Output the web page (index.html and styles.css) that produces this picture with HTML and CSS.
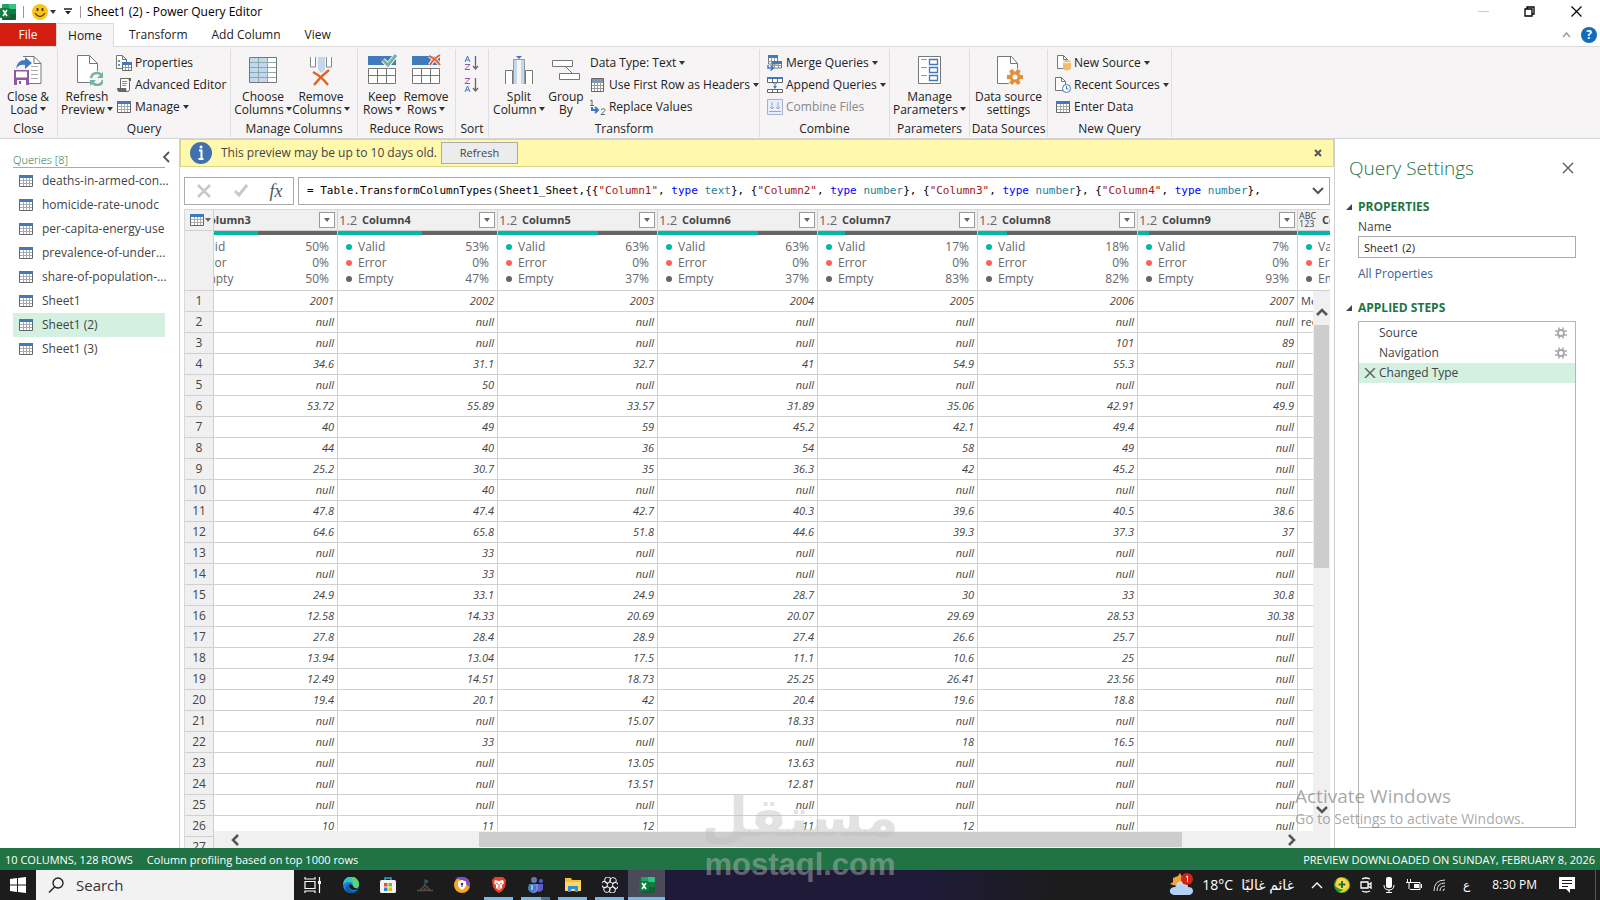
FILE: index.html
```html
<!DOCTYPE html>
<html lang="en">
<head>
  <meta charset="UTF-8">
  <meta name="viewport" content="width=device-width, initial-scale=1.0">
  <title>Sheet1 (2) - Power Query Editor</title>
  <link rel="stylesheet" href="styles.css">
</head>
<body>

<!-- shared icons -->
<svg class="defs" width="0" height="0" aria-hidden="true">
  <symbol id="i-table" viewBox="0 0 14 12">
    <path d="M.5 2v9.500h13V2" fill="#fff" stroke="#666"/>
    <path d="M4.500 3v8M7.500 3v8M10.500 3v8M1 5.500h12M1 8.500h12" stroke="#aaa"/>
    <path d="M0 0h14v3H0z" fill="#3f7abf"/>
  </symbol>
  <symbol id="i-excel" viewBox="0 0 16 16">
    <rect x="2" width="14" height="16" rx="1" fill="#21a366"/>
    <path d="M2 8h14v7q0 1-1 1H3q-1 0-1-1z" fill="#185c37"/>
    <path d="M9 0h6q1 0 1 1v4H9z" fill="#33c481"/>
    <path d="M9 5h7v5H9z" fill="#107c41"/>
    <rect y="4" width="10" height="10" rx="1" fill="#107c41"/>
    <path d="M3 6l4 6M7 6l-4 6" stroke="#fff" stroke-width="1.500"/>
  </symbol>
  <symbol id="i-gear" viewBox="0 0 12 12">
    <path d="M4 .5v11M8 .5v11M0 4h12M0 8h12" stroke="#aaa" stroke-width="1.600"/>
    <circle cx="6" cy="6" r="3" fill="#fff" stroke="#aaa" stroke-width="1.800"/>
  </symbol>
</svg>

<header class="titlebar">
  <svg class="app-icon" width="16" height="16"><use href="#i-excel"/></svg>
  <span class="sep"></span>
  <svg width="16" height="16" viewBox="0 0 16 16"><circle cx="8" cy="8" r="8" fill="#fcc419"/><path d="M5.500 4v3M10.500 4v3" stroke="#4a3b12" stroke-width="1.800"/><path d="M3 9q5 7 10 0" fill="none" stroke="#4a3b12" stroke-width="1.200"/></svg>
  <span class="caret caret-gap"></span>
  <svg class="quick" width="8" height="7" viewBox="0 0 8 7"><path d="M0 1h8" stroke="#222" stroke-width="1.500"/><path d="M1 3h6L4 6.500z" fill="#222"/></svg>
  <span class="sep"></span>
  <h1>Sheet1 (2) - Power Query Editor</h1>
  <div class="window-buttons">
    <button aria-label="Minimize"><svg width="11" height="11"><path d="M0 5.500h11" stroke="#ccc"/></svg></button>
    <button aria-label="Restore"><svg width="11" height="11" fill="none" stroke="#000" stroke-width="1.300"><path d="M1 3h7v7H1zM3 3V1h7v7H8"/></svg></button>
    <button aria-label="Close"><svg width="11" height="11" stroke="#000" stroke-width="1.200"><path d="M.5.5l10 10M10.500.5l-10 10"/></svg></button>
  </div>
</header>

<nav class="tabs">
  <button class="tab file">File</button>
  <button class="tab active">Home</button>
  <button class="tab">Transform</button>
  <button class="tab">Add Column</button>
  <button class="tab">View</button>
  <div class="tabs-right">
    <svg width="9" height="6" fill="none" stroke="#999" stroke-width="1.500"><path d="M1 5l3.500-4L8 5"/></svg>
    <button class="help" aria-label="Help">?</button>
  </div>
</nav>

<section class="ribbon">
  <div class="group g-close">
    <div class="items">
      <button class="big">
        <svg width="32" height="32" viewBox="0 0 32 32"><path d="M11 2.500h11l7 7v20H16" fill="#fff" stroke="#777"/><path d="M22 2.500v7h7" fill="none" stroke="#777"/><path d="M19 12.500h7M19 16.500h7M19 20.500h7M19 24.500h7" stroke="#aaa"/><path d="M4 15q1-9 9-9V3l7 6-7 6v-4q-6-1-9 4z" fill="#3f7abf"/><path d="M2 16h15v15H2z" fill="#8e5aa8"/><path d="M4 17.500h11v6H4zM5 26h9v5H5z" fill="#fff"/><path d="M7 27h2v3H7z" fill="#8e5aa8"/></svg>
        <span>Close &amp;<br>Load <i class="caret"></i></span>
      </button>
    </div>
    <h2>Close</h2>
  </div>

  <div class="group g-query">
    <div class="items">
      <button class="big">
        <svg width="32" height="32" viewBox="0 0 32 32"><path d="M6.500 1.500h12l8 8v19h-20z" fill="#fff" stroke="#777"/><path d="M18.500 1.500v8h8" fill="none" stroke="#777"/><circle cx="26" cy="25" r="8" fill="#f6f4f5"/><path d="M20 24q1-5 6-5 3 0 5 3M32 26q-1 5-6 5-3 0-5-3" fill="none" stroke="#75b39f" stroke-width="2.500"/><path d="M32 18v6h-6zM19 32v-6h6z" fill="#75b39f"/></svg>
        <span>Refresh<br>Preview <i class="caret"></i></span>
      </button>
      <div class="stack">
        <button class="small"><svg width="16" height="16" viewBox="0 0 16 16"><path d="M.5 13.500V.5h6l4 4v3M.5 13.500H6M6.500.5v4h4" fill="#fff" stroke="#777"/><path d="M2 5h2v2H2zM2 9h2v2H2z" fill="#888"/><path d="M6.500 9v6.500h9V9" fill="#fff" stroke="#666"/><path d="M9.500 10v5M12.500 10v5M7 12.500h8" stroke="#999"/><path d="M6 7h10v3H6z" fill="#3f7abf"/></svg>Properties</button>
        <button class="small"><svg width="16" height="16" viewBox="0 0 16 16"><path d="M4.500 11V1.500h10q-1 1-1 3v8q0 2-2 2H3" fill="#fff" stroke="#666"/><path d="M12 1h3v3h-2zM1 11h9q0 3 2 4H3q-2-1-2-4z" fill="#666"/><path d="M6 4.500h5M6 6.500h5M6 8.500h4" stroke="#888"/></svg>Advanced Editor</button>
        <button class="small"><svg width="16" height="12"><use href="#i-table"/></svg>Manage <i class="caret"></i></button>
      </div>
    </div>
    <h2>Query</h2>
  </div>

  <div class="group g-columns">
    <div class="items">
      <button class="big">
        <svg width="32" height="32" viewBox="0 0 32 32"><path d="M2.500 3.500h27v25h-27z" fill="#fff"/><path d="M2.500 3.500h18v25h-18z" fill="#c3d8ef"/><path d="M11.500 4v24M20.500 4v24M3 8.500h26M3 13.500h26M3 18.500h26M3 23.500h26" stroke="#8aa" fill="none"/><path d="M2.500 3.500h27v25h-27z" fill="none" stroke="#777"/></svg>
        <span>Choose<br>Columns <i class="caret"></i></span>
      </button>
      <button class="big">
        <svg width="32" height="32" viewBox="0 0 32 32"><path d="M5.500 3v10h5V3M26.500 3v10h-5V3" fill="#fff" stroke="#888"/><path d="M13 3h7v13l-3.500 3-3.500-3z" fill="#c3d8ef"/><path d="M8 18q9 5 15 13M24 16Q16 22 9 31" fill="none" stroke="#e0632c" stroke-width="2.500"/></svg>
        <span>Remove<br>Columns <i class="caret"></i></span>
      </button>
    </div>
    <h2>Manage Columns</h2>
  </div>

  <div class="group g-rows">
    <div class="items">
      <button class="big">
        <svg width="32" height="32" viewBox="0 0 32 32"><path d="M2 2h28v9H2z" fill="#3f7abf"/><path d="M2.500 14.500h27v15h-27zM11.500 14v15M20.500 14v15M2 21.500h27" fill="#fff" stroke="#777"/><path d="M17 6l5 5 8-10" fill="none" stroke="#f6f4f5" stroke-width="5"/><path d="M17 6l5 5 8-10" fill="none" stroke="#75b39f" stroke-width="3"/></svg>
        <span>Keep<br>Rows <i class="caret"></i></span>
      </button>
      <button class="big">
        <svg width="32" height="32" viewBox="0 0 32 32"><path d="M2 2h28v9H2z" fill="#3f7abf"/><path d="M2.500 14.500h27v15h-27zM11.500 14v15M20.500 14v15M2 21.500h27" fill="#fff" stroke="#777"/><path d="M19 2q7 3 11 9M30 1q-7 4-10 10" fill="none" stroke="#f6f4f5" stroke-width="4"/><path d="M19 2q7 3 11 9M30 1q-7 4-10 10" fill="none" stroke="#e0632c" stroke-width="2"/></svg>
        <span>Remove<br>Rows <i class="caret"></i></span>
      </button>
    </div>
    <h2>Reduce Rows</h2>
  </div>

  <div class="group g-sort">
    <div class="items sort">
      <button class="small" aria-label="Sort ascending"><svg width="16" height="16" viewBox="0 0 16 16" fill="none"><path d="M1 7l2.500-6L6 7M2 5h3" stroke="#3f7abf"/><path d="M1 9.500h5l-5 5h5" stroke="#8e5aa8"/><path d="M11.500 1v13M9 11l2.500 3 2.500-3" stroke="#666" stroke-width="1.300"/></svg></button>
      <button class="small" aria-label="Sort descending"><svg width="16" height="16" viewBox="0 0 16 16" fill="none"><path d="M1 1.500h5l-5 5h5" stroke="#8e5aa8"/><path d="M1 15l2.500-6L6 15M2 13h3" stroke="#3f7abf"/><path d="M11.500 1v13M9 11l2.500 3 2.500-3" stroke="#666" stroke-width="1.300"/></svg></button>
    </div>
    <h2>Sort</h2>
  </div>

  <div class="group g-transform">
    <div class="items">
      <button class="big">
        <svg width="32" height="32" viewBox="0 0 32 32"><path d="M2.500 30V16.500h7V30M29.500 30V16.500h-7V30" fill="#fff" stroke="#777"/><path d="M10.500 30V5.500h11V30" fill="#c3d8ef" stroke="#999"/><path d="M14 6h4v24h-4z" fill="#f6f4f5"/><path d="M13 2h6l-3 3z" fill="#3f7abf"/></svg>
        <span>Split<br>Column <i class="caret"></i></span>
      </button>
      <button class="big narrow">
        <svg width="32" height="32" viewBox="0 0 32 32"><path d="M2.500 6.500h20v6h-20zM9.500 19.500h20v6h-20z" fill="#fff" stroke="#777"/><path d="M16 13l6 6" stroke="#777"/></svg>
        <span>Group<br>By</span>
      </button>
      <div class="stack">
        <button class="small">Data Type: Text <i class="caret"></i></button>
        <button class="small"><svg width="16" height="14" viewBox="0 0 16 14"><path d="M1.500.5h12v13h-12z" fill="#fff" stroke="#666"/><path d="M2 1h11v3H2z" fill="#6b97cc"/><path d="M4.500 1v12M7.500 1v12M10.500 1v12M2 4.500h11M2 7.500h11M2 10.500h11" stroke="#999"/></svg>Use First Row as Headers <i class="caret"></i></button>
        <button class="small"><svg width="16" height="16" viewBox="0 0 16 16" fill="none"><path d="M0 2l2-1v6M0 6.500h4" stroke="#666"/><path d="M2 8v3h6M5 8l3 3-3 3" stroke="#3f7abf" stroke-width="2"/><path d="M11 10.500q4-2 4 1l-4 4h4" stroke="#666"/></svg>Replace Values</button>
      </div>
    </div>
    <h2>Transform</h2>
  </div>

  <div class="group g-combine">
    <div class="items">
      <div class="stack">
        <button class="small"><svg width="16" height="16" viewBox="0 0 16 16"><path d="M1.500 2v7h9V2M5.500 7v6h9V7" fill="#fff" stroke="#777"/><path d="M4.500 3v6M7.500 3v10M11.500 9v4M1 6.500h9M6 10.500h8" stroke="#999"/><path d="M1 0h10v3H1zM5 6h10v3H5z" fill="#3f7abf"/><path d="M1 10v3h5M3.500 10.500l3 2.500-3 2.500" fill="none" stroke="#3f7abf" stroke-width="1.500"/></svg>Merge Queries <i class="caret"></i></button>
        <button class="small"><svg width="16" height="16" viewBox="0 0 16 16"><path d="M.5 1.500h15v4H.5zM.5 12.500h15v3H.5zM5.500 2v3M10.500 2v3M5.500 13v2M10.500 13v2" fill="#fff" stroke="#666"/><path d="M0 0h16v2H0zM6 7h4L8 5zM6 9h4l-2 3zM7.500 6h1v5h-1z" fill="#3f7abf"/></svg>Append Queries <i class="caret"></i></button>
        <button class="small" disabled><svg width="16" height="16" viewBox="0 0 16 16" fill="none"><path d="M.5.5h15v15H.5z" fill="#e9effa" stroke="#a5b0d6"/><path d="M5 3v7M3 8l2 2 2-2M11 3v7M9 8l2 2 2-2M2 12.500h12" stroke="#96a4d0"/></svg>Combine Files</button>
      </div>
    </div>
    <h2>Combine</h2>
  </div>

  <div class="group g-params">
    <div class="items">
      <button class="big">
        <svg width="32" height="32" viewBox="0 0 32 32"><path d="M4.500 2.500h22v27h-22z" fill="#fff" stroke="#777"/><path d="M7 5.500h6M7 13.500h6M7 21.500h6" stroke="#999"/><path d="M15.500 5.500h8v5h-8zM15.500 13.500h8v5h-8zM15.500 21.500h8v5h-8z" fill="#fff" stroke="#3f7abf" stroke-width="1.300"/></svg>
        <span>Manage<br>Parameters <i class="caret"></i></span>
      </button>
    </div>
    <h2>Parameters</h2>
  </div>

  <div class="group g-sources">
    <div class="items">
      <button class="big">
        <svg width="32" height="32" viewBox="0 0 32 32"><path d="M4.500 2.500h14l6 7v20h-20z" fill="#fff" stroke="#777"/><path d="M17.500 2.500v7h7" fill="none" stroke="#777"/><circle cx="22" cy="23" r="9" fill="#f6f4f5"/><path d="M14 23h16M18 16l8 14M26 16l-8 14" stroke="#e0913a" stroke-width="4"/><circle cx="22" cy="23" r="5.500" fill="#e0913a"/><circle cx="22" cy="23" r="2.500" fill="#fff"/></svg>
        <span>Data source<br>settings</span>
      </button>
    </div>
    <h2>Data Sources</h2>
  </div>

  <div class="group g-new">
    <div class="items">
      <div class="stack">
        <button class="small"><svg width="16" height="16" viewBox="0 0 16 16"><path d="M2.500.5h6l4 4v9h-10z" fill="#fff" stroke="#777"/><path d="M8.500.5v4h4" fill="none" stroke="#777"/><path d="M8 6q4-2 8 0v8q-4 3-8 0z" fill="#efbd6b"/><path d="M8 7q4 2 8 0" fill="none" stroke="#fff"/></svg>New Source <i class="caret"></i></button>
        <button class="small"><svg width="16" height="16" viewBox="0 0 16 16"><path d="M.5.5h6l4 4v9H.5z" fill="#fff" stroke="#777"/><path d="M6.500.5v4h4" fill="none" stroke="#777"/><circle cx="11.500" cy="11.500" r="4" fill="#fff" stroke="#3f7abf"/><path d="M11.500 9v3h2" fill="none" stroke="#3f7abf"/></svg>Recent Sources <i class="caret"></i></button>
        <button class="small"><svg width="16" height="12"><use href="#i-table"/></svg>Enter Data</button>
      </div>
    </div>
    <h2>New Query</h2>
  </div>
</section>

<main class="workspace">
  <aside class="queries">
    <button class="collapse" aria-label="Collapse"><svg width="7" height="12" fill="none" stroke="#555" stroke-width="1.800"><path d="M6 1L1 6l5 5"/></svg></button>
    <h2>Queries [8]</h2>
    <ul>
      <li><svg width="14" height="12"><use href="#i-table"/></svg>deaths-in-armed-con...</li>
      <li><svg width="14" height="12"><use href="#i-table"/></svg>homicide-rate-unodc</li>
      <li><svg width="14" height="12"><use href="#i-table"/></svg>per-capita-energy-use</li>
      <li><svg width="14" height="12"><use href="#i-table"/></svg>prevalence-of-under...</li>
      <li><svg width="14" height="12"><use href="#i-table"/></svg>share-of-population-...</li>
      <li><svg width="14" height="12"><use href="#i-table"/></svg>Sheet1</li>
      <li class="selected"><svg width="14" height="12"><use href="#i-table"/></svg>Sheet1 (2)</li>
      <li><svg width="14" height="12"><use href="#i-table"/></svg>Sheet1 (3)</li>
    </ul>
  </aside>

  <section class="preview">
    <div class="notice">
      <svg width="22" height="22" viewBox="0 0 22 22"><circle cx="11" cy="11" r="11" fill="#3f72af"/><circle cx="11" cy="5" r="1.500" fill="#fff"/><path d="M9 8.500h2.500V17M8.500 17h5" fill="none" stroke="#fff" stroke-width="2"/></svg>
      <span>This preview may be up to 10 days old.</span>
      <button class="refresh">Refresh</button>
      <button class="dismiss" aria-label="Dismiss"><svg width="8" height="8" stroke="#555" stroke-width="2"><path d="M1 1l6 6M7 1L1 7"/></svg></button>
    </div>

    <div class="formula">
      <div class="formula-buttons">
        <button aria-label="Cancel"><svg width="16" height="14" fill="none" stroke="#c8c8c8" stroke-width="2.500"><path d="M2 1l12 12M14 1L2 13"/></svg></button>
        <button aria-label="Accept"><svg width="16" height="14" fill="none" stroke="#c8c8c8" stroke-width="3"><path d="M2 7l4 4 8-10"/></svg></button>
        <button class="fx">fx</button>
      </div>
      <div class="formula-box">
        <code contenteditable="true" spellcheck="false">= Table.TransformColumnTypes(Sheet1_Sheet,{{<s>"Column1"</s>, <b>type</b> <i>text</i>}, {<s>"Column2"</s>, <b>type</b> <i>number</i>}, {<s>"Column3"</s>, <b>type</b> <i>number</i>}, {<s>"Column4"</s>, <b>type</b> <i>number</i>},</code>
        <button aria-label="Expand"><svg width="12" height="8" fill="none" stroke="#555" stroke-width="2"><path d="M1 1l5 5 5-5"/></svg></button>
      </div>
    </div>

    <div class="grid">
      <table>
        <colgroup><col class="c-num"><col class="c-cut"><col><col><col><col><col><col><col></colgroup>
        <thead>
          <tr class="names" id="names"><th><button class="corner" aria-label="Table menu"><svg width="14" height="12"><use href="#i-table"/></svg><i class="caret"></i></button></th></tr>
          <tr class="profile" id="profile"><th></th></tr>
        </thead>
        <tbody id="rows"></tbody>
      </table>
      <div class="vscroll">
        <svg width="12" height="8" fill="none" stroke="#555" stroke-width="2.500"><path d="M1 7l5-5 5 5"/></svg>
        <div class="thumb"></div>
        <svg width="12" height="8" fill="none" stroke="#555" stroke-width="2.500"><path d="M1 1l5 5 5-5"/></svg>
      </div>
      <div class="hscroll">
        <svg width="8" height="12" fill="none" stroke="#555" stroke-width="2.500"><path d="M7 1L2 6l5 5"/></svg>
        <div class="thumb"></div>
        <svg width="8" height="12" fill="none" stroke="#555" stroke-width="2.500"><path d="M1 1l5 5-5 5"/></svg>
      </div>
    </div>
  </section>

  <aside class="settings">
    <div class="settings-head">
      <h2>Query Settings</h2>
      <button aria-label="Close pane"><svg width="12" height="12" stroke="#555" stroke-width="1.200"><path d="M1 1l10 10M11 1L1 11"/></svg></button>
    </div>
    <h3>PROPERTIES</h3>
    <label for="query-name">Name</label>
    <input type="text" id="query-name" value="Sheet1 (2)">
    <a href="#">All Properties</a>
    <h3>APPLIED STEPS</h3>
    <ul class="steps">
      <li><span>Source</span><svg width="12" height="12"><use href="#i-gear"/></svg></li>
      <li><span>Navigation</span><svg width="12" height="12"><use href="#i-gear"/></svg></li>
      <li class="selected"><svg class="del" width="12" height="10" stroke="#666" stroke-width="1.500"><path d="M1 0l10 10M11 0L1 10"/></svg><span>Changed Type</span></li>
    </ul>
  </aside>
</main>

<footer class="status">
  <span>10 COLUMNS, 128 ROWS</span>
  <span>Column profiling based on top 1000 rows</span>
  <span class="right">PREVIEW DOWNLOADED ON SUNDAY, FEBRUARY 8, 2026</span>
</footer>

<div class="taskbar">
  <button class="start" aria-label="Start"><svg width="16" height="16" fill="#fff"><path d="M0 2l7-1v6.500H0zM8 1l8-1v7.500H8zM0 8.500h7V15l-7-1zM8 8.500h8V16l-8-1z"/></svg></button>
  <div class="search">
    <svg width="16" height="16" fill="none" stroke="#222" stroke-width="1.400"><circle cx="10" cy="6" r="5"/><path d="M6.500 10L1 15.500"/></svg>
    <input type="text" placeholder="Search" aria-label="Search">
  </div>
  <div class="apps">
    <button aria-label="Task view"><svg width="18" height="16" fill="none" stroke="#fff" stroke-width="1.200"><path d="M1 4.500h10v7H1zM1 0v2h10V0M1 16v-2h10v2M15.500 0v16"/><path d="M14 4h3v3h-3z" fill="#fff" stroke="none"/></svg></button>
    <button aria-label="Edge"><svg width="16" height="16" viewBox="0 0 16 16"><circle cx="8" cy="8" r="8" fill="#1583d8"/><path d="M0 8a8 8 0 0 1 16-1q0 4-4 4-3 0-2-2Q10 5 6 5 2 5 0 8z" fill="#35c4c0"/><path d="M8 0q7 0 8 7 0 4-4 4-3 0-2-2 1-3-2-9z" fill="#5fd46a"/><path d="M6 7q-2 5 3 7 3 1 6-2-3 5-8 4-5-1-4-6 1-2 3-3z" fill="#0c59a4"/><path d="M10 9q-2-3-4-1 0 5 5 5 3 0 4-2-4 1-5-2z" fill="#1c1c1c"/></svg></button>
    <button aria-label="Store"><svg width="16" height="16" viewBox="0 0 16 16"><path d="M5 4V1h6v3" fill="none" stroke="#2aa7d8" stroke-width="1.500"/><rect y="3" width="16" height="13" rx="1.500" fill="#f3f3f3"/><path d="M4 6h3.500v3.500H4z" fill="#e8502a"/><path d="M8.500 6H12v3.500H8.500z" fill="#7db928"/><path d="M4 10.500h3.500V14H4z" fill="#1a8fe0"/><path d="M8.500 10.500H12V14H8.500z" fill="#f7b500"/></svg></button>
    <button aria-label="Game"><svg width="16" height="16" viewBox="0 0 16 16"><path d="M8 9V2" stroke="#3b5c70"/><path d="M8 3h3v3H8z" fill="#1f5a75"/><path d="M0 13.500h16M3 13l5-5 5 5" fill="none" stroke="#5b4a42" stroke-width="1.500"/><path d="M6 13l2-3 2 3z" fill="#3b4a5c"/></svg></button>
    <button aria-label="Browser"><svg width="16" height="16" viewBox="0 0 16 16"><circle cx="8" cy="8" r="8" fill="#f5a623"/><path d="M5 1a8 8 0 0 1 10 8q-3-6-10-8z" fill="#7a4be0" stroke="#7a4be0" stroke-width="2"/><path d="M8 3l4 1.500v4Q11 12 8 13q-3-1-4-4.500v-4z" fill="#fff"/><circle cx="8" cy="7" r="1.300" fill="#444"/><path d="M7.500 7h1v3h-1z" fill="#444"/></svg></button>
    <button class="open" aria-label="Brave"><svg width="16" height="16" viewBox="0 0 16 16"><path d="M4 0h8l3 3-1 7q-2 4-6 6-4-2-6-6L1 3z" fill="#e8432a"/><path d="M4 3l4 1 4-1 1 3-2 2 0 3-3 2-3-2 0-3-2-2z" fill="#fff"/><path d="M5 6l2 1M11 6L9 7M8 7v3M6.500 11h3" stroke="#e8432a"/></svg></button>
    <button class="open stacked" aria-label="Teams"><svg width="16" height="16" viewBox="0 0 16 16"><circle cx="6" cy="3" r="3" fill="#6878a8"/><circle cx="13" cy="4" r="2" fill="#5b5fc7"/><path d="M10 7h5v5q-1 3-5 3z" fill="#5b5fc7"/><path d="M1 7h9v6q-1 3-5 3-4-1-4-4z" fill="#7b83eb"/><circle cx="4" cy="11" r="4" fill="#3d7fb8"/><path d="M4 8v5" stroke="#fff"/></svg></button>
    <button class="open" aria-label="Explorer"><svg width="16" height="16" viewBox="0 0 16 16"><path d="M0 1h6l1 2h9v11H0z" fill="#f7bd3e"/><path d="M0 5h16v9H0z" fill="#ffd768"/><path d="M3 9h10v6h-3v-3H6v3H3z" fill="#2f8fdd"/></svg></button>
    <button class="open" aria-label="ChatGPT"><svg width="16" height="16" viewBox="-8 -8 16 16" fill="none" stroke="#eee"><g id="petal"><path d="M0-3V-5.500q2-3 5-1.500 2 2 1 4L3-1.500 0-3"/></g><use href="#petal" transform="rotate(60)"/><use href="#petal" transform="rotate(120)"/><use href="#petal" transform="rotate(180)"/><use href="#petal" transform="rotate(240)"/><use href="#petal" transform="rotate(300)"/></svg></button>
    <button class="open current" aria-label="Excel"><svg width="16" height="16"><use href="#i-excel"/></svg></button>
  </div>
  <div class="tray">
    <button class="weather">
      <svg width="25" height="24" viewBox="0 0 25 24"><path d="M9 3l2-3 2 4q1 6-5 9l-4-1-3-1 3-2V5z" fill="#f2a33c"/><circle cx="13" cy="14" r="6" fill="#cfe1f8"/><path d="M5 22q-5-1-4-5 1-3 5-3 6-6 13 0 5 0 5 4 0 3-4 4z" fill="#b5d2f5"/><circle cx="18" cy="6" r="6" fill="#d32516"/><path d="M17 4l1.500-1v6" fill="none" stroke="#fff"/></svg>
      <span>18°C</span><span lang="ar" dir="rtl">غائم غالبًا</span>
    </button>
    <svg class="t-up" width="12" height="8" fill="none" stroke="#fff" stroke-width="1.400"><path d="M1 7l5-5 5 5"/></svg>
    <svg class="t-green" width="16" height="16" viewBox="0 0 16 16"><circle cx="8" cy="8" r="8" fill="#2e9a3c"/><path d="M3 2a8 8 0 0 1 12 9q-6 6-10 4 6-2 4-5-6 3-8-2z" fill="#fbd21f"/><circle cx="8" cy="7.500" r="5" fill="#fbd96a"/><path d="M8 4v7M4.500 7.500h7" stroke="#167a2b" stroke-width="2"/></svg>
    <svg class="t-meet" width="12" height="16" fill="none" stroke="#fff" stroke-width="1.300"><path d="M1 5h7v6H1zM8 8l3-2v5L8 9M2 2q4-2 8 0M2 14q4 2 8 0"/></svg>
    <svg class="t-mic" width="12" height="16"><rect x="3" width="6" height="11" rx="2" fill="#fff"/><path d="M1 8q0 5 5 5t5-5M6 13v2M3 15.500h6" fill="none" stroke="#fff"/></svg>
    <svg class="t-bat" width="16" height="14" fill="none" stroke="#fff"><path d="M5 4.500h9v7H4M15.500 6v4M1.500 1v3M4.500 1v3M0 4.500h6M3 5v6"/><path d="M8 6h5v4H8z" fill="#fff" stroke="none"/></svg>
    <svg class="t-wifi" width="13" height="14" fill="none" stroke="#ddd"><path d="M1 13Q1 2 12 2M4 13q0-8 8-8M7 13q0-5 5-5M10 13q0-2 2-2"/></svg>
    <span class="lang" lang="ar">ع</span>
    <span class="clock">8:30 PM</span>
    <button class="notes" aria-label="Notifications"><svg width="16" height="16"><path d="M0 0h16v12h-5v4l-4-4H0z" fill="#fff"/><path d="M3 3.500h10M3 6.500h10M3 9.500h6" stroke="#1c1c1c"/></svg></button>
  </div>
</div>

<div class="activate">
  <p class="activate-title">Activate Windows</p>
  <p>Go to Settings to activate Windows.</p>
</div>
<div class="watermark">
  <p lang="ar">مستقل</p>
  <p class="site">mostaql.com</p>
</div>

<script src="script.js"></script>
</body>
</html>
```

FILE: styles.css
```css
* { box-sizing: border-box; margin: 0; padding: 0; }
body { height: 100vh; display: flex; flex-direction: column; overflow: hidden; background: #fff; color: #222; font: 12px/16px "Open Sans", "Noto Sans", "DejaVu Sans", sans-serif; }
button { font: inherit; color: inherit; border: 0; background: none; cursor: pointer; }
ul { list-style: none; }
h1, h2, h3 { font-size: 12px; font-weight: normal; }
svg { flex: none; display: block; }
.defs { position: absolute; }

.caret { display: inline-block; flex: none; border: 3px solid transparent; border-top: 4px solid #333; border-bottom: 0; vertical-align: 3px; }
.caret-gap { margin: 0 8px 0 2px; }

/* title bar */
.titlebar { display: flex; align-items: center; height: 23px; flex: none; color: #000; }
.sep { width: 1px; height: 12px; background: #999; margin: 0 8px 0 7px; }
.titlebar .sep:last-of-type { margin: 0 6px 0 8px; }
.window-buttons { margin-left: auto; display: flex; }
.window-buttons button { width: 46px; height: 22px; display: flex; align-items: center; justify-content: center; }
.window-buttons button:last-child { width: 48px; }

/* tabs */
.tabs { display: flex; height: 24px; flex: none; border-bottom: 1px solid #dadada; }
.tab { height: 23px; padding: 0 12px; }
.tab.file { width: 56px; background: #d41e12; color: #fff; }
.tab.active { width: 58px; height: 24px; padding: 0 11px; margin-right: 3px; background: #f6f4f5; border: 1px solid #dadada; border-bottom: 0; }
.tabs-right { margin-left: auto; display: flex; align-items: center; gap: 10px; padding-right: 3px; }
.help { width: 16px; height: 16px; border-radius: 8px; background: #0f6cbd; color: #fff; font-weight: bold; line-height: 16px; }

/* ribbon */
.ribbon { display: flex; height: 92px; flex: none; padding-top: 2px; background: #f6f4f5; border-bottom: 1px solid #d5d5d5; }
.group { display: flex; flex-direction: column; height: 88px; border-right: 1px solid #e0dede; white-space: nowrap; }
.group h2 { text-align: center; margin-top: auto; line-height: 16px; }
.items { display: flex; padding-top: 3px; }
.big { width: 58px; padding-top: 2px; display: flex; flex-direction: column; align-items: center; gap: 4px; line-height: 13px; }
.big .caret { margin-left: -1px; }
.big.narrow { width: 36px; }
.small { display: flex; align-items: center; height: 22px; gap: 3px; }
.small:disabled { color: #888; }
.g-close { width: 58px; }
.g-close .big { width: 56px; }
.g-query { width: 173px; }
.g-columns { width: 127px; }
.g-columns .items { padding-left: 3px; }
.g-rows { width: 98px; }
.g-rows .items { padding-left: 2px; }
.g-rows .big { width: 44px; }
.g-sort { width: 33px; }
.sort { flex-direction: column; align-items: center; }
.g-transform { width: 271px; }
.g-transform .items { padding-left: 1px; }
.g-transform .stack { padding-left: 6px; }
.g-combine { width: 130px; }
.g-combine .items, .g-new .items { padding-left: 7px; }
.g-params { width: 80px; }
.g-sources { width: 78px; }
.g-params .big, .g-sources .big { width: 100%; }
.g-new { width: 124px; }

/* workspace */
.workspace { flex: 1; min-height: 0; display: flex; }
.queries { width: 180px; flex: none; padding: 13px 14px 0 13px; border-right: 1px solid #d0d0d0; position: relative; color: #444; }
.queries h2 { color: #217346; font-size: 11px; font-weight: 300; padding-right: 8px; border-bottom: 1px solid #aaa; height: 16px; margin-bottom: 1px; }
.queries li { display: flex; align-items: center; gap: 9px; height: 24px; padding-left: 6px; white-space: nowrap; }
.selected { background: #d3f0e0; }
.collapse { position: absolute; right: 9px; top: 12px; }

.preview { flex: 1; min-width: 0; display: flex; flex-direction: column; border-right: 1px solid #d0d0d0; }
.notice { display: flex; align-items: center; gap: 9px; height: 28px; flex: none; padding: 0 11px 0 9px; background: #fff8ad; border: 1px solid #dcd68c; color: #444; }
.refresh { width: 77px; height: 22px; margin-left: -5px; border: 1px solid #aaa; background: #ececec; font-size: 11px; }
.dismiss { margin-left: auto; }
.formula { display: flex; gap: 4px; margin: 10px 4px 4px; height: 28px; flex: none; }
.formula-buttons { width: 110px; display: flex; align-items: center; justify-content: space-around; border: 1px solid #aaa; }
.fx { font: italic 18px/20px "Liberation Serif", serif; color: #555; }
.formula-box { flex: 1; min-width: 0; display: flex; align-items: center; justify-content: space-between; padding: 0 5px 0 8px; border: 1px solid #aaa; }
.formula-box code { font: 11px/16px "DejaVu Sans Mono", monospace; color: #000; white-space: nowrap; overflow: hidden; outline: 0; }
code s { color: #a31515; text-decoration: none; }
code b { color: #0000ff; font-weight: normal; }
code i { color: #267f99; font-style: normal; }

/* data grid */
.grid { position: relative; flex: 1; min-height: 0; overflow: hidden; margin: 0 4px 0 4px; border-top: 1px solid #d8d8d8; border-left: 1px solid #d8d8d8; }
.grid table { table-layout: fixed; width: 1273px; border-spacing: 0; color: #444; }
.grid col { width: 160px; }
.grid .c-num { width: 29px; }
.grid .c-cut { width: 124px; }
.grid th, .grid td { border-right: 1px solid #d0d0d0; border-bottom: 1px solid #d0d0d0; font-weight: normal; overflow: hidden; white-space: nowrap; }
.grid tbody th, .profile th:first-child { background: #f0f0f0; }
.names th { height: 21px; background: #f0f0f0; }
.cut { display: flex; justify-content: flex-end; }
.head { display: flex; align-items: center; width: 159px; height: 20px; padding: 0 2px 0 1px; flex: none; }
.head .type { width: 23px; font-size: 13px; color: #666; text-align: left; }
.head .type.any { font-size: 9px; line-height: 8px; color: #444; }
.head b { flex: 1; text-align: left; font-size: 11px; }
.head button { width: 16px; height: 16px; border: 1px solid #999; background: #fff; display: flex; align-items: center; justify-content: center; }
.head .caret, .corner .caret { border-top-color: #666; }
.corner { display: flex; align-items: center; gap: 1px; padding-left: 5px; }
.profile th { height: 60px; vertical-align: top; }
.stats { width: 159px; flex: none; color: #666; }
.bar { height: 4px; background: #666; margin-bottom: 4px; }
.bar div { height: 4px; background: #00b8aa; }
.stats p { display: flex; align-items: center; padding: 0 8px; line-height: 16px; }
.stats p::before { content: ""; width: 6px; height: 6px; border-radius: 3px; margin-right: 6px; background: #666; }
.stats .valid::before { background: #00b8aa; }
.stats .error::before { background: #fd625e; }
.stats span { margin-left: auto; }
.grid tbody th, .grid tbody td { height: 21px; line-height: 20px; }
.grid td { font-size: 11px; font-style: italic; text-align: right; padding-right: 3px; }
.grid td:last-child { font-style: normal; text-align: left; padding-left: 3px; }

.vscroll, .hscroll { position: absolute; display: flex; align-items: center; background: #f0f0f0; }
.vscroll { top: 81px; right: 0; bottom: 17px; width: 17px; flex-direction: column; padding: 17px 0 17px; gap: 9px; }
.vscroll .thumb { width: 15px; height: 48%; background: #cdcdcd; margin-bottom: auto; }
.hscroll { left: 29px; right: 0; bottom: 0; height: 17px; padding: 0 34px 0 17px; }
.hscroll .thumb { width: 66%; height: 15px; background: #cdcdcd; margin: 0 auto 0 22.5%; }

/* settings */
.settings { width: 265px; flex: none; display: flex; flex-direction: column; padding: 14px 24px 20px 23px; color: #444; }
.settings-head { display: flex; align-items: center; justify-content: space-between; height: 30px; margin: 0 2px 15px -9px; }
.settings-head h2 { font-size: 19px; font-weight: 300; color: #217346; }
.settings h3 { font-weight: bold; color: #217346; height: 18px; line-height: 18px; position: relative; }
.settings h3::before { content: ""; position: absolute; left: -12px; top: 6px; border-left: 6px solid transparent; border-bottom: 6px solid #444; }
.settings label { height: 20px; line-height: 22px; }
.settings input { height: 22px; border: 1px solid #aaa; padding: 0 5px; font: inherit; font-size: 11px; color: #222; }
.settings a { color: #3a6096; text-decoration: none; margin: 8px 0 17px; }
.steps { flex: 1; margin-top: 4px; padding-top: 1px; border: 1px solid #b5b5b5; }
.steps li { display: flex; align-items: center; height: 20px; padding: 0 8px 0 20px; position: relative; }
.steps li span { flex: 1; }
.steps .del { position: absolute; left: 5px; top: 5px; }

/* status bar and taskbar */
.status { display: flex; align-items: center; gap: 14px; height: 22px; flex: none; padding: 2px 5px 0; background: #217346; color: #fff; font-size: 11px; }
.status .right { margin-left: auto; }
.taskbar { display: flex; height: 30px; flex: none; color: #fff; background: linear-gradient(90deg, #1c1c1c 0 37%, #1e1a38 42% 58%, #1c1c1c 66%); }
.start { width: 36px; display: flex; align-items: center; justify-content: center; }
.search { width: 258px; display: flex; align-items: center; gap: 12px; padding-left: 12px; background: #f2f2f2; }
.search input { flex: 1; min-width: 0; border: 0; outline: 0; background: none; font: inherit; font-size: 15px; }
.search input::placeholder { color: #333; opacity: 1; }
.apps { display: flex; }
.apps button { width: 37px; display: flex; align-items: center; justify-content: center; border-bottom: 3px solid transparent; border-top: 3px solid transparent; }
.apps button:first-child { width: 38px; }
.apps .open { position: relative; }
.apps .open::after { content: ""; position: absolute; left: 4px; right: 4px; bottom: -3px; height: 3px; background: #76b9ed; }
.apps .stacked::after { background: linear-gradient(90deg, #76b9ed 70%, #4c7496 70%); }
.apps .current { background: #4b4a58; }
.apps .current::after { left: 0; right: 0; }
.tray { margin-left: auto; display: flex; align-items: center; font-size: 12px; }
.weather { display: flex; align-items: center; gap: 8px; font-size: 14px; margin-right: 17px; }
.t-up { margin-right: 11px; }
.t-green { margin-right: 10px; }
.t-meet { margin-right: 11px; }
.t-mic { margin-right: 11px; }
.t-bat { margin-right: 11px; }
.t-wifi { margin-right: 17px; }
.lang { margin-right: 22px; }
.clock { margin-right: 22px; }
.notes { padding-right: 20px; border-right: 1px solid #555; height: 30px; margin-right: 4px; }

/* overlays */
.activate { position: absolute; left: 1295px; top: 783px; color: rgba(120, 120, 120, .65); font-size: 14px; line-height: 20px; pointer-events: none; }
.activate-title { font-size: 19px; line-height: 26px; }
.watermark { position: absolute; left: 700px; top: 786px; width: 200px; text-align: center; color: rgba(190, 190, 190, .45); font: bold 54px/64px "DejaVu Sans", sans-serif; pointer-events: none; }
.watermark .site { font: bold 31px/30px "Liberation Sans", sans-serif; }
```

FILE: script.js
```js
var columns = [
  { name: "Column3", valid: 50, empty: 50 },
  { name: "Column4", valid: 53, empty: 47 },
  { name: "Column5", valid: 63, empty: 37 },
  { name: "Column6", valid: 63, empty: 37 },
  { name: "Column7", valid: 17, empty: 83 },
  { name: "Column8", valid: 18, empty: 82 },
  { name: "Column9", valid: 7, empty: 93 },
  { name: "Column10", valid: 100, empty: 0, any: true }
];

// n = null
var data = [
  "2001 2002 2003 2004 2005 2006 2007 Mean",
  "n n n n n n n recent",
  "n n n n n 101 89",
  "34.6 31.1 32.7 41 54.9 55.3 n",
  "n 50 n n n n n",
  "53.72 55.89 33.57 31.89 35.06 42.91 49.9",
  "40 49 59 45.2 42.1 49.4 n",
  "44 40 36 54 58 49 n",
  "25.2 30.7 35 36.3 42 45.2 n",
  "n 40 n n n n n",
  "47.8 47.4 42.7 40.3 39.6 40.5 38.6",
  "64.6 65.8 51.8 44.6 39.3 37.3 37",
  "n 33 n n n n n",
  "n 33 n n n n n",
  "24.9 33.1 24.9 28.7 30 33 30.8",
  "12.58 14.33 20.69 20.07 29.69 28.53 30.38",
  "27.8 28.4 28.9 27.4 26.6 25.7 n",
  "13.94 13.04 17.5 11.1 10.6 25 n",
  "12.49 14.51 18.73 25.25 26.41 23.56 n",
  "19.4 20.1 42 20.4 19.6 18.8 n",
  "n n 15.07 18.33 n n n",
  "n 33 n n 18 16.5 n",
  "n n 13.05 13.63 n n n",
  "n n 13.51 12.81 n n n",
  "n n n n n n n",
  "10 11 12 11 12 n n",
  ""
];

var names = "";
var profile = "";
columns.forEach(function (c, i) {
  var open = i === 0 ? '<th><div class="cut">' : "<th><div>";
  var type = c.any ? '<span class="type any">ABC<br>123</span>' : '<span class="type">1.2</span>';
  names += open + '<div class="head">' + type + "<b>" + c.name + '</b><button aria-label="Filter ' + c.name + '"><i class="caret"></i></button></div></div></th>';
  profile += open + '<div class="stats"><div class="bar"><div style="width:' + c.valid + '%"></div></div>' +
    '<p class="valid">Valid<span>' + c.valid + '%</span></p>' +
    '<p class="error">Error<span>0%</span></p>' +
    '<p class="empty">Empty<span>' + c.empty + '%</span></p></div></div></th>';
});
document.getElementById("names").innerHTML += names;
document.getElementById("profile").innerHTML += profile;

document.getElementById("rows").innerHTML = data.map(function (line, i) {
  var values = line.split(" ");
  var cells = columns.map(function (c, j) {
    return "<td>" + (values[j] === "n" ? "null" : values[j] || "") + "</td>";
  }).join("");
  return "<tr><th>" + (i + 1) + "</th>" + cells + "</tr>";
}).join("");
```
